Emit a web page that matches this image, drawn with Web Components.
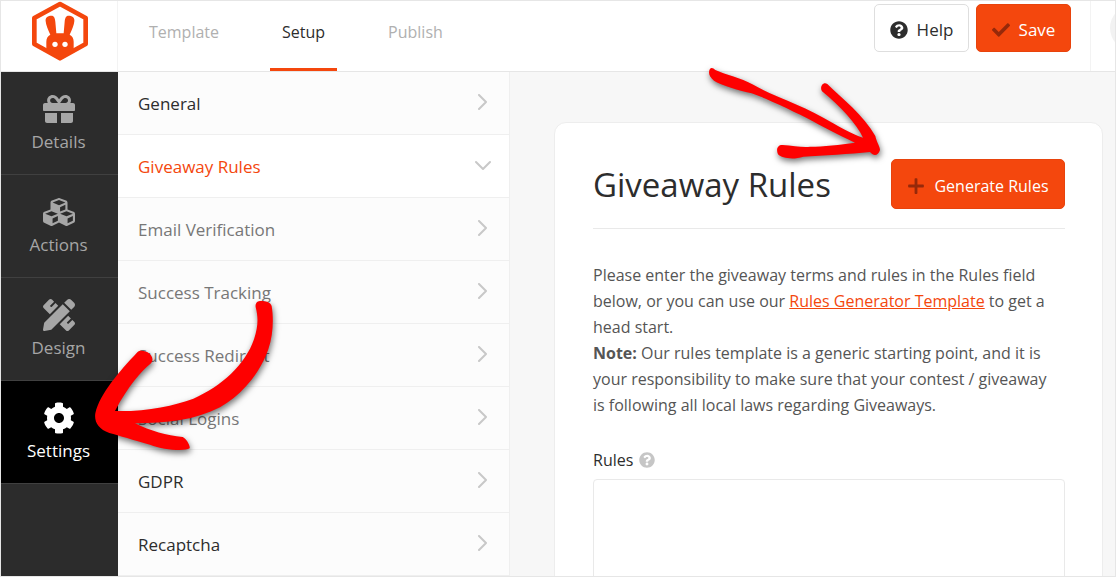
<!DOCTYPE html>
<html lang="en">
<head>
<meta charset="utf-8">
<title>Giveaway Rules</title>
<style>
  body { margin: 0; font: 16px/26px "Segoe UI", "Open Sans", sans-serif; color: #2d2d2d; background: #f7f7f7; }
</style>
</head>
<body>
<giveaway-app></giveaway-app>
<script>
const ICONS = {
  gift: 'M32 448c0 17.7 14.3 32 32 32h160V320H32v128zm256 32h160c17.7 0 32-14.3 32-32V320H288v160zm192-320h-42.1c6.2-12.1 10.1-25.5 10.1-40 0-48.5-39.5-88-88-88-41.6 0-68.5 21.3-103 68.3-34.5-47-61.4-68.3-103-68.3-48.5 0-88 39.5-88 88 0 14.5 3.8 27.9 10.1 40H32c-17.7 0-32 14.3-32 32v80c0 8.8 7.2 16 16 16h480c8.8 0 16-7.2 16-16v-80c0-17.7-14.3-32-32-32zm-326.1 0c-22.1 0-40-17.9-40-40s17.9-40 40-40c19.9 0 34.6 3.3 86.1 80h-86.1zm206.1 0h-86.1c51.4-76.5 65.7-80 86.1-80 22.1 0 40 17.9 40 40s-17.9 40-40 40z',
  cubes: 'M488.6 250.2L392 214V105.5c0-15-9.3-28.4-23.4-33.7l-100-37.5c-8.1-3.1-17.1-3.1-25.3 0l-100 37.5c-14.1 5.3-23.4 18.7-23.4 33.7V214l-96.6 36.2C9.3 255.5 0 268.9 0 283.9V394c0 13.6 7.7 26.1 19.9 32.2l100 50c10.1 5.1 22.1 5.1 32.2 0l103.9-52 103.9 52c10.1 5.1 22.1 5.1 32.2 0l100-50c12.2-6.1 19.9-18.6 19.9-32.2V283.9c0-15-9.3-28.4-23.4-33.7zM358 214.8l-85 31.9v-68.2l85-37v73.3zM154 104.1l102-38.2 102 38.2v.6l-102 41.4-102-41.4v-.6zm84 291.1l-85 42.5v-79.1l85-38.8v75.4zm0-112l-102 41.4-102-41.4v-.6l102-38.2 102 38.2v.6zm240 112l-85 42.5v-79.1l85-38.8v75.4zm0-112l-102 41.4-102-41.4v-.6l102-38.2 102 38.2v.6z',
  design: 'M109.46 244.04l134.58-134.56-44.12-44.12-61.68 61.68a7.919 7.919 0 0 1-11.21 0l-11.21-11.21c-3.1-3.1-3.1-8.12 0-11.21l61.68-61.68-33.64-33.65C131.47-3.1 111.39-3.1 99 9.29L9.29 99c-12.38 12.39-12.39 32.47 0 44.86l100.17 100.18zm388.47-116.8c18.76-18.76 18.75-49.17 0-67.93l-45.25-45.25c-18.76-18.76-49.18-18.76-67.95 0l-46.02 46.01 113.2 113.2 46.02-46.03zM316.08 82.71l-297 296.96L.32 487.11c-2.53 14.49 10.09 27.11 24.59 24.56l107.45-18.84L429.28 195.9 316.08 82.71zm186.63 285.43l-33.64-33.64-61.68 61.68c-3.1 3.1-8.12 3.1-11.21 0l-11.21-11.21c-3.09-3.1-3.09-8.12 0-11.21l61.68-61.68-44.14-44.14L267.93 402.5l100.21 100.2c12.39 12.39 32.47 12.39 44.86 0l89.71-89.7c12.39-12.39 12.39-32.47 0-44.86z',
  cog: 'M487.4 315.7l-42.6-24.6c4.3-23.2 4.3-47 0-70.2l42.6-24.6c4.9-2.8 7.1-8.6 5.5-14-11.1-35.6-30-67.8-54.7-94.6-3.8-4.1-10-5.1-14.8-2.3L380.8 110c-17.9-15.4-38.5-27.3-60.8-35.1V25.8c0-5.6-3.9-10.5-9.4-11.7-36.7-8.2-74.3-7.8-109.2 0-5.5 1.2-9.4 6.1-9.4 11.7V75c-22.2 7.9-42.8 19.8-60.8 35.1L88.7 85.5c-4.9-2.8-11-1.9-14.8 2.3-24.7 26.7-43.6 58.9-54.7 94.6-1.7 5.4.6 11.2 5.5 14L67.3 221c-4.3 23.2-4.3 47 0 70.2l-42.6 24.6c-4.9 2.8-7.1 8.6-5.5 14 11.1 35.6 30 67.8 54.7 94.6 3.8 4.1 10 5.1 14.8 2.3l42.6-24.6c17.9 15.4 38.5 27.3 60.8 35.1v49.2c0 5.6 3.9 10.5 9.4 11.7 36.7 8.2 74.3 7.8 109.2 0 5.5-1.2 9.4-6.1 9.4-11.7v-49.2c22.2-7.9 42.8-19.8 60.8-35.1l42.6 24.6c4.9 2.8 11 1.9 14.8-2.3 24.7-26.7 43.6-58.9 54.7-94.6 1.5-5.5-.7-11.3-5.6-14.1zM256 336c-44.1 0-80-35.9-80-80s35.9-80 80-80 80 35.9 80 80-35.9 80-80 80z',
  question: 'M504 256c0 136.997-111.043 248-248 248S8 392.997 8 256C8 119.083 119.043 8 256 8s248 111.083 248 248zM262.655 90c-54.497 0-89.255 22.957-116.549 63.758-3.536 5.286-2.353 12.415 2.715 16.258l34.699 26.31c5.205 3.947 12.621 3.008 16.665-2.122 17.864-22.658 30.113-35.797 57.303-35.797 20.429 0 45.698 13.148 45.698 32.958 0 14.976-12.363 22.667-32.534 33.976C247.128 238.528 216 254.941 216 296v4c0 6.627 5.373 12 12 12h56c6.627 0 12-5.373 12-12v-1.333c0-28.462 83.186-29.647 83.186-106.667 0-58.002-60.165-102-116.531-102zM256 338c-25.365 0-46 20.635-46 46 0 25.364 20.635 46 46 46s46-20.636 46-46c0-25.365-20.635-46-46-46z',
  check: 'M173.898 439.404l-166.4-166.4c-9.997-9.997-9.997-26.206 0-36.204l36.203-36.204c9.997-9.998 26.207-9.998 36.204 0L192 312.69 432.095 72.596c9.997-9.997 26.207-9.997 36.204 0l36.203 36.204c9.997 9.997 9.997 26.206 0 36.204l-294.4 294.401c-9.998 9.997-26.207 9.997-36.204-.001z',
  plus: 'M240 32h32q24 0 24 24v160h160q24 0 24 24v32q0 24-24 24H296v160q0 24-24 24h-32q-24 0-24-24V296H56q-24 0-24-24v-32q0-24 24-24h160V56q0-24 24-24z'
};

function define(name, render) {
  customElements.define(name, class extends HTMLElement {
    connectedCallback() {
      if (this.shadowRoot) return;
      const template = document.createElement('template');
      template.innerHTML = render(this);
      this.attachShadow({ mode: 'open' }).append(template.content.cloneNode(true));
    }
  });
}

define('ui-icon', el => `
  <style>
    :host { display: inline-flex; flex: none; width: 16px; height: 16px; }
    svg { width: 100%; height: 100%; fill: currentColor; }
  </style>
  <svg viewBox="0 0 512 512" aria-hidden="true"><path d="${ICONS[el.getAttribute('name')]}"/></svg>`);

define('ui-button', el => `
  <style>
    :host { display: block; }
    button { display: flex; align-items: center; justify-content: center; gap: 9px; box-sizing: border-box;
      width: 100%; height: 100%; padding: 3px 15px 0; border: 1px solid #dedede; border-radius: 5px; background: #fff; color: #2d2d2d;
      font: inherit; white-space: nowrap; cursor: pointer; }
    ui-icon { width: 18px; height: 18px; }
    :host([primary]) button { background: #f4470d; border-color: #e8430c; color: #fff; }
    :host([primary]) ui-icon { color: #96290a; }
  </style>
  <button type="button"><ui-icon name="${el.getAttribute('icon')}"></ui-icon><slot></slot></button>`);

define('brand-logo', () => `
  <style>
    :host { display: flex; justify-content: center; }
    svg { width: 56px; height: 60px; }
  </style>
  <svg viewBox="96 0 168 180" role="img" aria-label="RafflePress">
    <path d="M180 9L257 51V129L180 172L103 129V51Z" fill="none" stroke="#f4470d" stroke-width="14" stroke-linejoin="round"/>
    <path fill="#f4470d" d="M137 61C135 48 145 44 154 44C163 44 165 52 166 62L169 97H191L194 62C195 52 197 44 206 44C215 44 225 48 223 61C222 72 216 86 209 101C217 105 221 112 221 122V151L180 175L139 151V122C139 112 143 105 151 101C144 86 138 72 137 61Z"/>
    <circle cx="165" cy="130" r="8" fill="#fff"/><circle cx="195" cy="130" r="8" fill="#fff"/>
  </svg>`);

define('nav-tab', () => `
  <style>
    :host { display: flex; }
    a { display: flex; align-items: center; box-sizing: border-box; padding: 0 12px 6px; border-bottom: 3px solid transparent;
      color: #b0b0b0; text-decoration: none; }
    :host([active]) a { color: #2d2d2d; border-bottom-color: #f4470d; }
  </style>
  <a href="#"><slot></slot></a>`);

define('top-bar', () => `
  <style>
    :host { display: flex; height: 70px; background: #fff; border-bottom: 1px solid #e6e6e6; overflow: hidden; }
    brand-logo { flex: none; box-sizing: border-box; width: 117px; padding-left: 1px; border-right: 1px solid #f3f3f3; }
    nav { display: flex; gap: 39px; margin-left: 19px; flex: 1; }
    .actions { display: flex; gap: 7px; padding: 3px 19px 0 0; font-size: 17px; }
    .actions ui-button { width: 95px; height: 48px; }
    .account { flex: none; box-sizing: border-box; width: 25px; padding: 4px 0 0 19px; border-left: 1px solid #f3f3f3; overflow: hidden; }
    .avatar { width: 46px; height: 46px; border-radius: 50%; background: #f2f2f2; }
  </style>
  <brand-logo></brand-logo>
  <nav aria-label="Steps">
    <nav-tab>Template</nav-tab><nav-tab active>Setup</nav-tab><nav-tab>Publish</nav-tab>
  </nav>
  <div class="actions">
    <ui-button icon="question">Help</ui-button>
    <ui-button icon="check" primary>Save</ui-button>
  </div>
  <div class="account"><div class="avatar"></div></div>`);

define('rail-item', el => `
  <style>
    :host { display: block; border-bottom: 1px solid #404040; }
    a { display: flex; flex-direction: column; align-items: center; gap: 4px; height: 81px; padding: 21px 2px 0 0; color: #a6a6a6; text-decoration: none; font-size: 17px; }
    ui-icon { width: 32px; height: 32px; }
    :host([active]) { background: #000; }
    :host([active]) a { color: #fff; }
  </style>
  <a href="#"><ui-icon name="${el.getAttribute('icon')}"></ui-icon><slot></slot></a>`);

define('side-rail', () => `
  <style>
    :host { display: block; background: #2c2c2c; }
  </style>
  <nav aria-label="Sections">
    <rail-item icon="gift">Details</rail-item>
    <rail-item icon="cubes">Actions</rail-item>
    <rail-item icon="design">Design</rail-item>
    <rail-item icon="cog" active>Settings</rail-item>
  </nav>`);

define('menu-row', el => `
  <style>
    :host { display: block; color: #2d2d2d; font-size: 17px; }
    a { display: flex; align-items: center; justify-content: space-between; box-sizing: border-box; height: 63px; padding: 2px 18px 0 20px;
      border-bottom: 1px solid #efefef; color: inherit; text-decoration: none; }
    svg { width: 16px; height: 16px; margin-bottom: 4px; fill: none; stroke: #c8c8c8; stroke-width: 2; stroke-linecap: round; stroke-linejoin: round; }
    :host([muted]) { color: #777; }
    :host([open]) { color: #f4470d; background: #fff; }
  </style>
  <a href="#"><span><slot></slot></span>
    <svg viewBox="0 0 16 16" aria-hidden="true"><path d="${el.hasAttribute('open') ? 'M1 5L8 12L15 5' : 'M4 1L11 8L4 15'}"/></svg></a>`);

define('settings-menu', () => `
  <style>
    :host { display: block; background: #fcfcfc; border-right: 1px solid #efefef; }
  </style>
  <nav aria-label="Settings">
    <menu-row>General</menu-row>
    <menu-row open>Giveaway Rules</menu-row>
    <menu-row muted>Email Verification</menu-row>
    <menu-row muted>Success Tracking</menu-row>
    <menu-row muted>Success Redirect</menu-row>
    <menu-row muted>Social Logins</menu-row>
    <menu-row>GDPR</menu-row>
    <menu-row>Recaptcha</menu-row>
  </nav>`);

define('rules-card', () => `
  <style>
    :host { display: block; background: #fff; border: 1px solid #ededed; border-radius: 12px; padding: 36px 37px 36px 38px; }
    header { display: flex; align-items: flex-end; justify-content: space-between; padding-bottom: 19px; border-bottom: 1px solid #e9e9e9; }
    h1 { margin: 0; font-size: 33px; line-height: 48px; font-weight: 400; white-space: nowrap; }
    ui-button { width: 174px; height: 50px; }
    p { margin: 0; color: #555; }
    .intro { margin: 33px 0 29px; padding-right: 6px; }
    a { color: #f4470d; }
    .label { display: flex; align-items: center; gap: 6px; margin-bottom: 6px; }
    .label ui-icon { color: #c6c6c6; }
    textarea { display: block; box-sizing: border-box; width: 100%; height: 240px; border: 1px solid #e9e9e9; border-radius: 4px; padding: 12px; font: inherit; resize: none; background: #fff; }
  </style>
  <header><h1>Giveaway Rules</h1><ui-button icon="plus" primary>Generate Rules</ui-button></header>
  <div class="intro">
    <p>Please enter the giveaway terms and rules in the Rules field below, or you can use our <a href="#">Rules Generator Template</a> to get a head start.</p>
    <p><strong>Note:</strong> Our rules template is a generic starting point, and it is your responsibility to make sure that your contest / giveaway is following all local laws regarding Giveaways.</p>
  </div>
  <div class="label"><label for="rules">Rules</label><ui-icon name="question"></ui-icon></div>
  <textarea id="rules"></textarea>`);

define('callout-arrow', el => `
  <style>
    :host { display: block; width: 220px; pointer-events: none; }
    svg { display: block; width: 100%; overflow: visible; fill: #fe0000; filter: drop-shadow(1px 3px 3px rgba(0,0,0,.55)); }
  </style>
  ${el.getAttribute('kind') === 'curved'
    ? `<svg viewBox="0 0 660 570" aria-hidden="true"><path d="M527 82C525 68 533 63 543 63C556 63 572 66 575 78C581 115 580 165 565 208C540 282 482 347 420 382C347 420 260 430 165 430C212 453 260 467 308 471C318 476 331 495 329 505C314 514 250 510 210 494C160 480 118 467 88 459C55 447 42 425 46 400C60 340 118 275 172 217C180 209 197 213 206 219C216 226 222 240 213 250C184 274 144 319 105 393C200 395 280 378 340 356C425 320 497 252 522 178C535 138 535 112 527 82Z"/></svg>`
    : `<svg viewBox="0 0 660 510" aria-hidden="true"><path d="M57 67C58 52 67 50 76 60C110 76 150 82 190 104C250 139 330 162 400 203C443 227 486 253 519 263C500 222 452 170 396 124C388 111 399 94 412 102C455 144 522 197 556 258C559 275 570 289 570 300C564 317 552 320 540 306C480 312 400 317 340 320C310 330 276 325 264 313C257 296 264 284 278 285C310 287 340 293 360 290C400 290 450 284 495 278C440 253 400 231 350 204C300 180 240 150 185 130C150 122 92 105 72 92C62 84 57 76 57 67Z"/></svg>`}`);

define('giveaway-app', () => `
  <style>
    :host { display: grid; grid-template-columns: 117px 392px minmax(0, 1fr); grid-template-rows: auto minmax(0, 1fr);
      box-sizing: border-box; height: 100vh; border: 1px solid #e6e6e6; position: relative; overflow: hidden; }
    top-bar { grid-column: 1 / -1; }
    main { padding: 50px 12px 0 44px; overflow: hidden; }
    settings-menu { overflow: hidden; }
    callout-arrow { position: absolute; }
    .to-settings { left: 79px; top: 279px; }
    .to-generate { left: 689px; top: 49px; }
  </style>
  <top-bar></top-bar>
  <side-rail></side-rail>
  <settings-menu></settings-menu>
  <main><rules-card></rules-card></main>
  <callout-arrow class="to-settings" kind="curved"></callout-arrow>
  <callout-arrow class="to-generate" kind="straight"></callout-arrow>`);
</script>
</body>
</html>
